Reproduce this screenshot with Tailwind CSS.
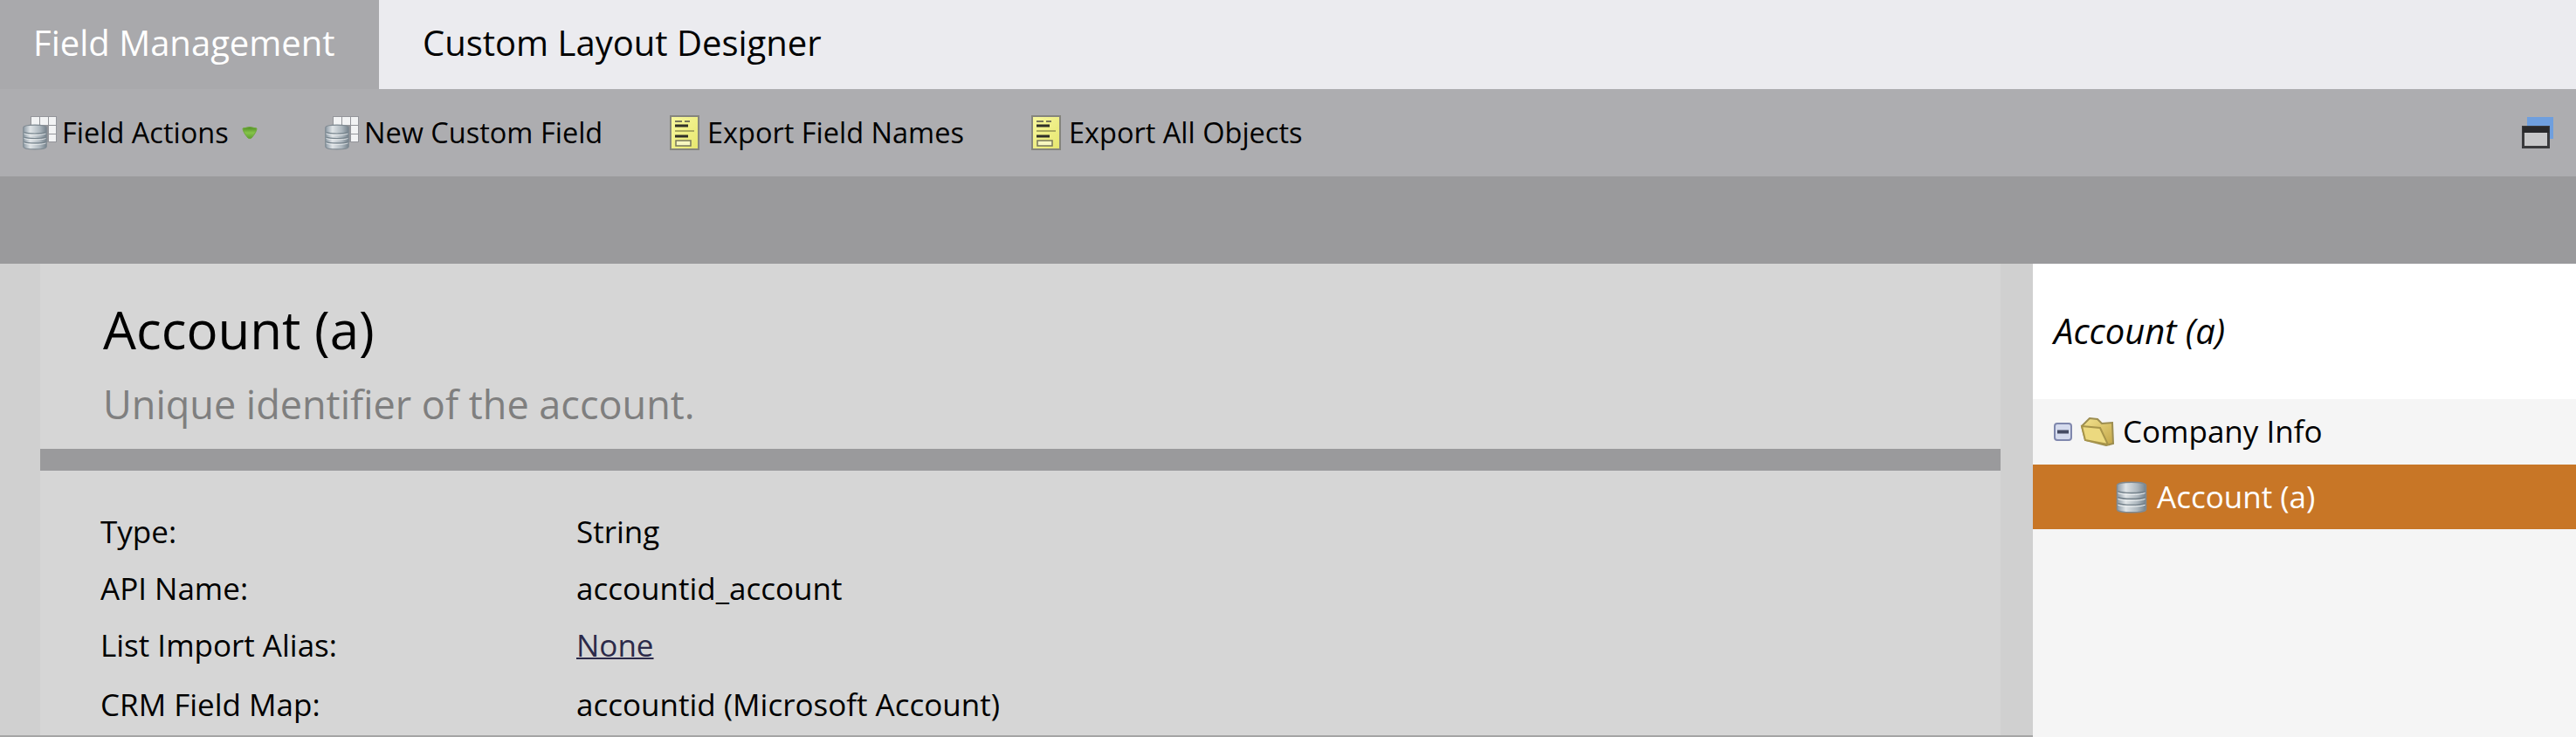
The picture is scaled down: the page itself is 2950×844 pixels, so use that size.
<!DOCTYPE html>
<html lang="en">

<head>
  <meta charset="UTF-8">
  <title>Field Management</title>
  <script src="https://cdn.jsdelivr.net/npm/@tailwindcss/browser@4"></script>
</head>

<body class="h-[844px] w-[2950px] overflow-hidden bg-[#d6d6d6] font-['Open_Sans',sans-serif] text-black">
  <!-- shared icons -->
  <svg class="absolute h-0 w-0">
    <defs>
      <linearGradient id="steel" x1="0" x2="1" y1="0" y2="0">
        <stop offset="0" stop-color="#8d9aa5" />
        <stop offset="0.3" stop-color="#dfe4e7" />
        <stop offset="0.7" stop-color="#aeb8bf" />
        <stop offset="1" stop-color="#75828c" />
      </linearGradient>
      <linearGradient id="paper" x1="0" x2="1" y1="0" y2="1">
        <stop offset="0" stop-color="#f8f8a0" />
        <stop offset="1" stop-color="#e6e66e" />
      </linearGradient>
      <linearGradient id="folder" x1="0" x2="1" y1="0" y2="1">
        <stop offset="0" stop-color="#f5e590" />
        <stop offset="1" stop-color="#c2a548" />
      </linearGradient>
      <linearGradient id="leaf" x1="0" x2="0" y1="0" y2="1">
        <stop offset="0" stop-color="#4e8c22" />
        <stop offset="0.5" stop-color="#86c44a" />
        <stop offset="1" stop-color="#5c9e2e" />
      </linearGradient>
      <symbol id="cylinder" viewBox="0 0 36 38">
        <path d="M1 5c0-5 34-5 34 0v28c0 5-34 5-34 0z" fill="url(#steel)" stroke="#7f8a92" stroke-width="1.5" />
        <path d="M2 12c6 2.500 26 2.500 32 0M2 19c6 2.500 26 2.500 32 0M2 26c6 2.500 26 2.500 32 0" fill="none" stroke="#76838c" stroke-width="1.500" />
        <path d="M2 14c6 2.500 26 2.500 32 0M2 21c6 2.500 26 2.500 32 0M2 28c6 2.500 26 2.500 32 0" fill="none" stroke="#eef1f2" stroke-width="1" />
      </symbol>
      <symbol id="table-db" viewBox="0 0 39 39">
        <rect x="9" y="0" width="30" height="30" fill="#93959a" />
        <path d="M10 1h9v9h-9zM20 1h9v9h-9zM30 1h8v9h-8zM30 11h8v9h-8zM30 21h8v8h-8z" fill="#f2f3f4" />
        <use href="#cylinder" x="0" y="9" width="28" height="30" />
      </symbol>
      <symbol id="form-doc" viewBox="0 0 34 40">
        <rect x="1" y="1" width="32" height="38" fill="url(#paper)" stroke="#85857d" stroke-width="2" />
        <path d="M6 6h8v2H6zM17 6h6v2h-6z" fill="#77775a" />
        <path d="M6 12h15M6 24h15" stroke="#2f2f28" stroke-width="3" />
        <path d="M6 18h22" stroke="#a9a95e" stroke-width="2" />
        <rect x="7" y="29" width="17" height="6" fill="#f7f7c0" stroke="#77775a" stroke-width="1.5" />
      </symbol>
    </defs>
  </svg>

  <!-- tabs -->
  <div class="flex h-[102px] bg-[#ebebef] text-[40px] leading-[98px]">
    <div class="w-[434px] bg-[#a9a9ac] pl-[38px] text-white">Field Management</div>
    <div class="pl-[50px]">Custom Layout Designer</div>
  </div>

  <!-- toolbar -->
  <div class="flex h-[100px] items-center justify-between bg-[#adadb0] pr-[26px] pl-[26px] text-[32.5px]">
    <div class="flex items-center">
      <div class="flex w-[346px] items-center">
        <svg class="mr-[6px] h-[39px] w-[39px]"><use href="#table-db" /></svg>
        <span>Field Actions</span>
        <svg class="ml-[15px] h-[16px] w-[18px]" viewBox="0 0 18 16">
          <path d="M1 3q8-3 16 0q0 4-6 11q-2 1.500-4 0q-6-7-6-11z" fill="url(#leaf)" stroke="#6fa83d" />
        </svg>
      </div>
      <div class="flex w-[395px] items-center">
        <svg class="mr-[6px] h-[39px] w-[39px]"><use href="#table-db" /></svg>
        <span>New Custom Field</span>
      </div>
      <div class="flex w-[414px] items-center">
        <svg class="mr-[9px] h-[40px] w-[34px]"><use href="#form-doc" /></svg>
        <span>Export Field Names</span>
      </div>
      <div class="flex items-center">
        <svg class="mr-[9px] h-[40px] w-[34px]"><use href="#form-doc" /></svg>
        <span>Export All Objects</span>
      </div>
    </div>
    <svg class="h-[36px] w-[36px]" viewBox="0 0 36 36">
      <rect x="6" y="0" width="30" height="25" fill="#6f9fde" />
      <rect x="1.500" y="11.500" width="29" height="23" fill="#c8c8c9" stroke="#3a3a3c" stroke-width="3" />
      <rect x="1" y="11" width="30" height="7" fill="#29292b" />
    </svg>
  </div>

  <div class="h-[100px] bg-[#9a9a9c]"></div>

  <!-- content -->
  <div class="flex h-[542px]">
    <div class="flex w-[2328px] border-b-2 border-[#a5a5a5]">
      <div class="w-[46px] bg-[#d0d0d0]"></div>

      <main class="w-[2245px]">
        <div class="h-[212px] pt-[35px] pl-[72px]">
          <h1 class="text-[60px] leading-[80px]">Account (a)</h1>
          <p class="mt-[16px] text-[45px] leading-[60px] text-[#7f7f7f]">Unique identifier of the account.</p>
        </div>
        <div class="h-[25px] bg-[#9a9a9c]"></div>
        <dl class="grid grid-cols-[545px_1fr] pt-[37px] pl-[69px] text-[35px] leading-[65px]">
          <dt>Type:</dt>
          <dd>String</dd>
          <dt>API Name:</dt>
          <dd>accountid_account</dd>
          <dt>List Import Alias:</dt>
          <dd><a class="text-[#2c2a4a] underline decoration-2" href="#">None</a></dd>
          <dt class="mt-[3px]">CRM Field Map:</dt>
          <dd class="mt-[3px]">accountid (Microsoft Account)</dd>
        </dl>
      </main>

      <div class="flex-1 bg-[#d0d0d0]"></div>
    </div>

    <!-- tree panel -->
    <aside class="flex-1 bg-[#f5f5f5]">
      <div class="h-[155px] bg-white pl-[24px] text-[40px] leading-[153px] italic">Account (a)</div>
      <div class="flex h-[75px] items-center pl-[24px] text-[35px]">
        <svg class="h-[21px] w-[21px]" viewBox="0 0 21 21">
          <rect x="1" y="1" width="19" height="19" rx="3" fill="#d5dbee" stroke="#7f87ad" stroke-width="2" />
          <rect x="4" y="8.500" width="13" height="4" fill="#454b63" />
        </svg>
        <svg class="mr-[10px] ml-[9px] h-[33px] w-[39px]" viewBox="0 0 39 33">
          <path d="M2 10l9-9 9 1 5 5 12-1 1 24-8 2L6 26z" fill="url(#folder)" stroke="#9c8d50" stroke-width="2" />
          <path d="M2 10l21 2 9 19-26-5z" fill="#ecd97f" stroke="#a8954a" stroke-width="2" />
        </svg>
        <span>Company Info</span>
      </div>
      <div class="flex h-[74px] items-center bg-[#c87626] pl-[95px] text-[35px] text-white">
        <svg class="mr-[11px] h-[37px] w-[36px]"><use href="#cylinder" /></svg>
        <span>Account (a)</span>
      </div>
    </aside>
  </div>
</body>

</html>
